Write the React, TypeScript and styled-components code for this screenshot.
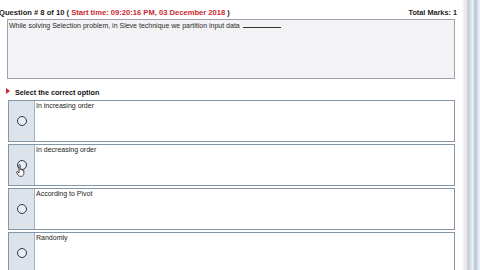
import React from 'react';
import styled, { createGlobalStyle } from 'styled-components';

const Global = createGlobalStyle`
  html, body { margin: 0; padding: 0; background: #fff; }
  body { font-family: "Liberation Sans", Arial, sans-serif; overflow: hidden; }
`;

const Page = styled.div`
  display: flex;
  width: 480px;
  height: 270px;
  overflow: hidden;
  background: #fff;
`;

const Main = styled.div`
  flex: 1;
  display: flex;
  flex-direction: column;
  padding: 7px 3px 0 7px;
  min-width: 0;
  overflow: hidden;

  & > * {
    flex-shrink: 0;
  }
`;

const HeaderRow = styled.div`
  display: flex;
  justify-content: space-between;
  align-items: baseline;
  margin-left: -8px;
  font-size: 7.6px;
  font-weight: bold;
  color: #222;
  height: 12px;
  line-height: 12px;
`;

const Red = styled.span`
  color: #c8282e;
`;

const Marks = styled.span`
  margin-right: 2px;
  font-size: 7.3px;
`;

const QuestionBox = styled.div`
  border: 1px solid #9aa4ae;
  background: #f3f3f5;
  padding: 2px 1px;
  font-size: 7px;
  color: #2a2a2a;
  box-sizing: border-box;
  height: 60px;
  margin-right: 4px;
`;

const Blank = styled.span`
  display: inline-block;
  width: 38px;
  border-bottom: 1px solid #333;
  margin-left: 3px;
`;

const SelectLabel = styled.div`
  position: relative;
  margin-top: 9px;
  padding-left: 8px;
  font-size: 7.2px;
  font-weight: bold;
  color: #111;
  height: 10px;
  line-height: 10px;
`;

const Triangle = styled.span`
  position: absolute;
  left: -1px;
  top: 0px;
  width: 0;
  height: 0;
  border-top: 3px solid transparent;
  border-bottom: 3px solid transparent;
  border-left: 4px solid #c8282e;
`;

const Options = styled.div`
  display: flex;
  flex-direction: column;
  gap: 2px;
  margin-top: 2px;
  margin-left: 1px;
  margin-right: 4px;
`;

const OptionRow = styled.div`
  position: relative;
  display: flex;
  height: 42px;
  border: 1px solid #8497a8;
  box-sizing: border-box;
  flex-shrink: 0;
`;

const RadioCell = styled.div`
  width: 25px;
  background: #dde3ea;
  border-right: 1px solid #9fb0bf;
  display: flex;
  align-items: center;
  justify-content: center;
`;

const Radio = styled.span`
  width: 8px;
  height: 8px;
  border: 1.5px solid #25384a;
  border-radius: 50%;
  background: #e8eef4;
`;

const OptionText = styled.div`
  flex: 1;
  background: #fff;
  font-size: 7px;
  color: #222;
  padding: 1px 1px;
`;

const Cursor = styled.svg`
  position: absolute;
  left: 7px;
  top: 19px;
`;

const ScrollStrip = styled.div`
  width: 18px;
  height: 100%;
  background: linear-gradient(
    to right,
    #ffffff 0px,
    #f1ecec 2px,
    #e6e4e8 5px,
    #b9c6d6 6px,
    #d6dde6 8px,
    #eef1f5 11px,
    #b3c3d6 13px,
    #c9d4e2 15px,
    #eef1f5 17px
  );
`;

const options = [
  'In increasing order',
  'In decreasing order',
  'According to Pivot',
  'Randomly',
];

export default function App() {
  return (
    <Page>
      <Global />
      <Main>
        <HeaderRow>
          <span>
            Question # 8 of 10 ( <Red>Start time: 09:20:16 PM, 03 December 2018</Red> )
          </span>
          <Marks>Total Marks: 1</Marks>
        </HeaderRow>
        <QuestionBox>
          While solving Selection problem, in Sleve technique we partition input data
          <Blank />
        </QuestionBox>
        <SelectLabel>
          <Triangle />
          Select the correct option
        </SelectLabel>
        <Options>
          {options.map((o, i) => (
            <OptionRow key={o}>
              <RadioCell>
                <Radio />
              </RadioCell>
              <OptionText>{o}</OptionText>
              {i === 1 && (
                <Cursor width="10" height="13" viewBox="0 0 10 13">
                  <path
                    d="M3 1.2 C3 0.5 4.2 0.5 4.2 1.2 L4.2 5.5 C4.3 5 5.4 5 5.4 5.6 L5.4 6 C5.5 5.5 6.6 5.5 6.6 6.1 L6.6 6.5 C6.7 6 7.8 6 7.8 6.7 L7.8 9.5 C7.8 11 7 12.3 5.6 12.3 L4.2 12.3 C3 12.3 2.4 11.5 1.8 10.6 L0.6 8.4 C0.2 7.8 1 7.1 1.6 7.6 L3 9 Z"
                    fill="#fff"
                    stroke="#222"
                    strokeWidth="0.8"
                  />
                </Cursor>
              )}
            </OptionRow>
          ))}
        </Options>
      </Main>
      <ScrollStrip />
    </Page>
  );
}
